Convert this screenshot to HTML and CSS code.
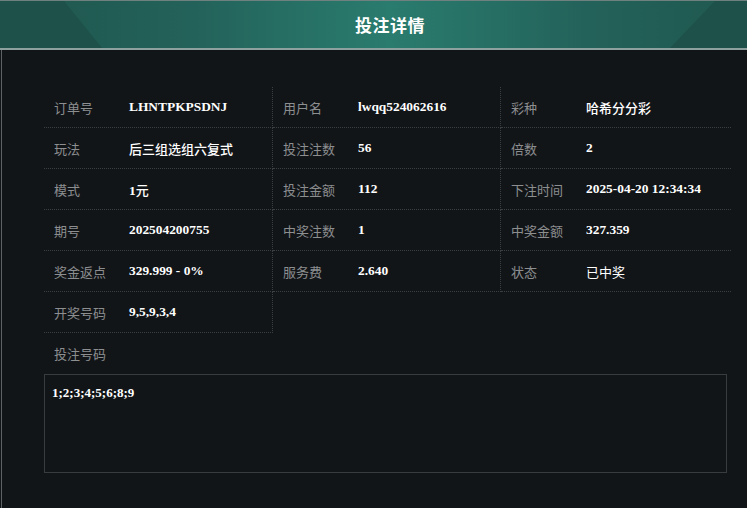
FILE: index.html
```html
<!DOCTYPE html>
<html lang="zh">
<head>
<meta charset="utf-8">
<title>投注详情</title>
<link rel="stylesheet" href="styles.css">
</head>
<body>
<div class="modal">
  <div class="modal-header">
    <span class="corner corner-left"></span>
    <span class="corner corner-right"></span>
    <h1 class="modal-title">投注详情</h1>
  </div>
  <div class="modal-body">
    <div class="info-grid">
      <div class="cell"><span class="label">订单号</span><span class="value">LHNTPKPSDNJ</span></div>
      <div class="cell"><span class="label">用户名</span><span class="value">lwqq524062616</span></div>
      <div class="cell cell-last"><span class="label">彩种</span><span class="value value-cjk">哈希分分彩</span></div>

      <div class="cell"><span class="label">玩法</span><span class="value value-cjk">后三组选组六复式</span></div>
      <div class="cell"><span class="label">投注注数</span><span class="value">56</span></div>
      <div class="cell cell-last"><span class="label">倍数</span><span class="value">2</span></div>

      <div class="cell"><span class="label">模式</span><span class="value">1<span class="cjk">元</span></span></div>
      <div class="cell"><span class="label">投注金额</span><span class="value">112</span></div>
      <div class="cell cell-last"><span class="label">下注时间</span><span class="value">2025-04-20 12:34:34</span></div>

      <div class="cell"><span class="label">期号</span><span class="value">202504200755</span></div>
      <div class="cell"><span class="label">中奖注数</span><span class="value">1</span></div>
      <div class="cell cell-last"><span class="label">中奖金额</span><span class="value">327.359</span></div>

      <div class="cell"><span class="label">奖金返点</span><span class="value">329.999 - 0%</span></div>
      <div class="cell"><span class="label">服务费</span><span class="value">2.640</span></div>
      <div class="cell cell-last"><span class="label">状态</span><span class="value value-plain">已中奖</span></div>

      <div class="cell"><span class="label">开奖号码</span><span class="value">9,5,9,3,4</span></div>
    </div>
    <div class="codes-label">投注号码</div>
    <div class="codes-box">1;2;3;4;5;6;8;9</div>
  </div>
</div>
</body>
</html>
```

FILE: styles.css
```css
html, body {
  margin: 0;
  padding: 0;
  background: #121518;
  overflow: hidden;
  width: 747px;
  height: 508px;
}

.modal {
  width: 780px;
  height: 508px;
  background: #121518;
  font-family: "Noto Sans CJK SC", "Noto Sans", sans-serif;
}

.modal-header {
  position: relative;
  height: 47px;
  border-top: 1px solid #6f817e;
  border-bottom: 2px solid #8fa19e;
  background: linear-gradient(90deg, #1f564d 0%, #23625a 25%, #2a7c6e 50%, #23625a 75%, #1f564d 100%);
  display: flex;
  align-items: center;
  justify-content: center;
  overflow: hidden;
}

.corner {
  position: absolute;
  top: 0;
  bottom: 0;
  width: 110px;
}

.corner-left {
  left: 0;
  background: #1d5149;
  clip-path: polygon(0 0, 64px 0, 102px 100%, 0 100%);
}

.corner-right {
  right: 0;
  background: #1d5149;
  clip-path: polygon(45px 0, 110px 0, 110px 100%, 0px 100%);
}

.modal-title {
  position: relative;
  margin: 0;
  font-size: 17px;
  font-weight: bold;
  color: #ffffff;
  letter-spacing: 0.5px;
}

.modal-body {
  border-left: 1px solid #5d6365;
  margin-left: 1px;
  height: 459px;
  padding: 37px 0 0 42px;
  box-sizing: border-box;
}

.info-grid {
  display: grid;
  grid-template-columns: 229px 228px 230px;
  grid-auto-rows: 41px;
  width: 687px;
}

.cell {
  display: flex;
  align-items: center;
  padding-left: 10px;
  border-bottom: 1px dotted #3b3f43;
  border-right: 1px dotted #3b3f43;
  box-sizing: border-box;
}

.cell-last {
  border-right: none;
}

.label {
  width: 75px;
  flex: none;
  font-size: 13px;
  color: #8c8e90;
}

.value {
  font-family: "Liberation Serif", "Noto Sans CJK SC", serif;
  font-weight: bold;
  font-size: 13.4px;
  color: #ffffff;
}

.value-cjk,
.cjk {
  font-family: "Noto Sans CJK SC", sans-serif;
  font-weight: 500;
  font-size: 13px;
}

.value-plain {
  font-family: "Noto Sans CJK SC", sans-serif;
  font-weight: normal;
  font-size: 13px;
}

.codes-label {
  padding-left: 10px;
  height: 41px;
  line-height: 41px;
  font-size: 13px;
  color: #8c8e90;
}

.codes-box {
  width: 683px;
  height: 99px;
  box-sizing: border-box;
  border: 1px solid #383c3f;
  padding: 10px 7px;
  font-family: "Liberation Serif", serif;
  font-weight: bold;
  font-size: 13px;
  color: #ffffff;
}
```
